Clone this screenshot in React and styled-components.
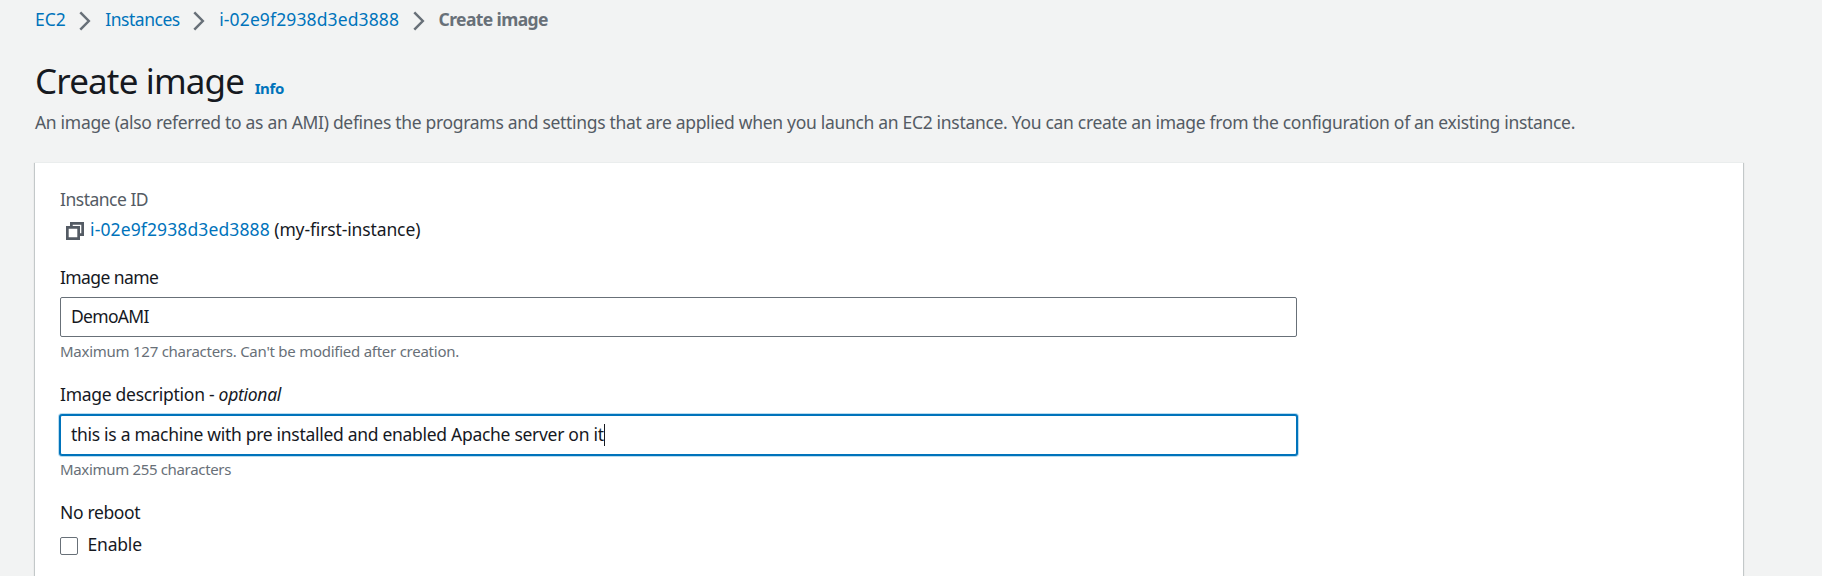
import React from "react";
import styled, { createGlobalStyle } from "styled-components";

const GlobalStyle = createGlobalStyle`
  * { box-sizing: border-box; }
  body {
    margin: 0;
    background: #f2f3f3;
    color: #16191f;
    font-family: "Noto Sans", "Open Sans", sans-serif;
    font-size: 17.5px;
    line-height: 25px;
    overflow: hidden;
  }
`;

const Page = styled.main`
  height: 576px;
  padding: 7px 79px 0 35px;
  overflow: hidden;
`;

const Breadcrumbs = styled.nav`
  display: flex;
  align-items: center;
  height: 25px;
`;

const Text = styled.span`
  white-space: pre;
  letter-spacing: ${(p) => p.$track || 0}px;
`;

const Link = styled.a`
  color: #0073bb;
  text-decoration: none;
  white-space: pre;
  letter-spacing: ${(p) => p.$track || 0}px;
`;

const Current = styled(Text)`
  color: #687078;
  font-weight: 700;
`;

const Chevron = styled.svg`
  flex: none;
  width: 12px;
  height: 20px;
  margin: 3px 14px 0 13.5px;
  fill: none;
  stroke: #687078;
  stroke-width: 2.5;
`;

const Heading = styled.header`
  display: flex;
  align-items: baseline;
  gap: 10.5px;
  height: 45px;
  margin-top: 26px;
`;

const Title = styled.h1`
  margin: 0;
  font-size: 35px;
  font-weight: 400;
  line-height: 45px;
  letter-spacing: -0.85px;
`;

const InfoLink = styled(Link)`
  font-size: 15px;
  font-weight: 700;
`;

const Summary = styled.p`
  margin: 7px 0 0;
  color: #545b64;
  white-space: nowrap;
  letter-spacing: -0.309px;
`;

const Panel = styled.section`
  height: 460px;
  margin-top: 27px;
  padding: 24px 25px;
  background: #fff;
  border-top: 1px solid #eaeded;
  box-shadow: 0 1px 1px 0 rgba(0, 28, 36, 0.3), 1px 1px 1px 0 rgba(0, 28, 36, 0.15),
    -1px 1px 1px 0 rgba(0, 28, 36, 0.15);
`;

const InstanceLabel = styled.div`
  color: #545b64;
  letter-spacing: -0.5px;
`;

const InstanceValue = styled.div`
  display: flex;
  align-items: center;
  height: 25px;
  margin-top: 5px;
  padding-left: 6px;
`;

const CopyIcon = styled.svg`
  width: 18px;
  height: 18px;
  margin: 3px 6px 0 0;
  fill: none;
  stroke: #545b64;
  stroke-width: 2.7;
`;

const Field = styled.div`
  width: 1237px;
  margin-top: ${(p) => p.$gap}px;
`;

const Label = styled.label`
  display: block;
  height: 25px;
`;

const Control = styled.div`
  display: flex;
  align-items: center;
  height: 40px;
  margin-top: ${(p) => (p.$focused ? 8 : 7)}px;
  padding: 0 10px 2px;
  background: #fff;
  border: 1px solid ${(p) => (p.$focused ? "#0073bb" : "#687078")};
  border-radius: 2px;
  box-shadow: ${(p) => (p.$focused ? "0 0 0 1px #0073bb, 0 0 0 2px #b8dcf0" : "none")};
`;

const Caret = styled.i`
  width: 1px;
  height: 22px;
  margin-top: 2px;
  background: #16191f;
`;

const Hint = styled.div`
  height: 20px;
  margin-top: 4px;
  color: #687078;
  font-size: 15px;
  line-height: 20px;
  letter-spacing: ${(p) => p.$track}px;
`;

const CheckRow = styled.div`
  display: flex;
  align-items: center;
  gap: 9.5px;
  height: 25px;
  margin-top: 7px;
`;

const Checkbox = styled.span`
  width: 18px;
  height: 18px;
  margin-top: 3px;
  border: 1px solid #687078;
  border-radius: 2px;
  background: #fff;
`;

const Separator = () => (
  <Chevron viewBox="0 0 12 20">
    <path d="M1.3 1.3 L9.8 10 L1.3 18.7" />
  </Chevron>
);

export default function App() {
  return (
    <Page>
      <GlobalStyle />
      <Breadcrumbs>
        <Link>EC2</Link>
        <Separator />
        <Link $track={-0.48}>Instances</Link>
        <Separator />
        <Link $track={0.12}>i-02e9f2938d3ed3888</Link>
        <Separator />
        <Current $track={-0.6}>Create image</Current>
      </Breadcrumbs>
      <Heading>
        <Title>Create image</Title>
        <InfoLink $track={-0.4}>Info</InfoLink>
      </Heading>
      <Summary>
        An image (also referred to as an AMI) defines the programs and settings that are applied when you launch an EC2
        instance. You can create an image from the configuration of an existing instance.
      </Summary>
      <Panel>
        <InstanceLabel>Instance ID</InstanceLabel>
        <InstanceValue>
          <CopyIcon viewBox="0 0 18 18">
            <path d="M1.35 5.35h11.3v11.3H1.35zM5.35 5V1.35h11.3v11.3H13" />
          </CopyIcon>
          <Link $track={0.12}>i-02e9f2938d3ed3888</Link>
          <Text $track={-0.13}> (my-first-instance)</Text>
        </InstanceValue>
        <Field $gap={23}>
          <Label>
            <Text $track={-0.6}>Image name</Text>
          </Label>
          <Control>
            <Text $track={-0.7}>DemoAMI</Text>
          </Control>
          <Hint $track={-0.255}>Maximum 127 characters. Can't be modified after creation.</Hint>
        </Field>
        <Field $gap={21}>
          <Label>
            <Text $track={-0.28}>
              Image description - <em>optional</em>
            </Text>
          </Label>
          <Control $focused>
            <Text $track={-0.295}>this is a machine with pre installed and enabled Apache server on it</Text>
            <Caret />
          </Control>
          <Hint $track={-0.33}>Maximum 255 characters</Hint>
        </Field>
        <Field $gap={21}>
          <Label>
            <Text $track={-0.35}>No reboot</Text>
          </Label>
          <CheckRow>
            <Checkbox />
            <Text $track={-0.2}>Enable</Text>
          </CheckRow>
        </Field>
      </Panel>
    </Page>
  );
}
